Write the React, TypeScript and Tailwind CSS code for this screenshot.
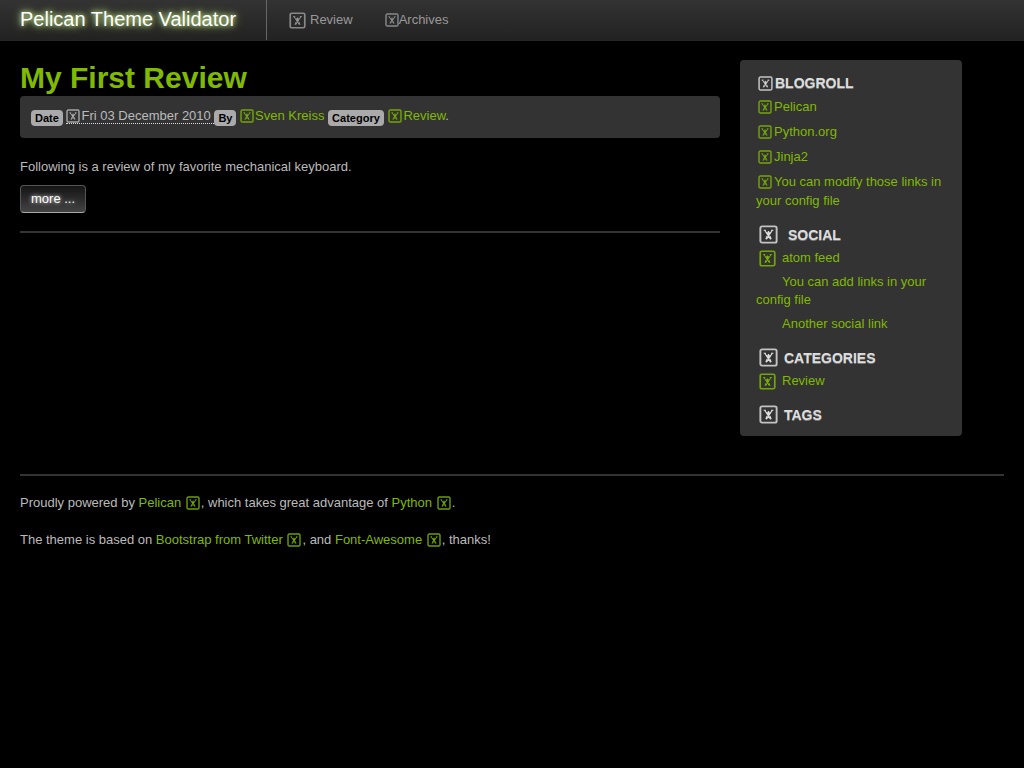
import type { ReactNode } from "react";

function Glyph({ className = "" }: { className?: string }) {
  return (
    <svg
      viewBox="0 0 18 18"
      aria-hidden="true"
      fill="none"
      stroke="currentColor"
      className={`inline-block shrink-0 ${className}`}
    >
      <rect x="1.3" y="1.3" width="15.4" height="15.4" rx="1.6" strokeWidth="1.8" opacity="0.85" />
      <path
        d="M4.4 4.9h2.2M11.4 4.9h2.2M5.4 5l5.6 8.6M12.6 5L7 13.6M9 5.8v3.4M7.4 6.4L9 9.6l1.6-3.2M6.4 13.4l1.2-3M11.6 13.4l-1.2-3"
        strokeWidth="1"
      />
    </svg>
  );
}

function Badge({ children }: { children: ReactNode }) {
  return (
    <span className="inline-block rounded bg-[#aaa] px-1 align-[-2px] text-[11px] leading-4 font-bold text-black">
      {children}
    </span>
  );
}

const link = "text-[#80b900] hover:underline";
const heading =
  "flex items-center text-sm leading-[18px] font-bold text-[#ddd] uppercase [text-shadow:0_1px_0_#777]";

function ExternalLink({ href, children }: { href: string; children: ReactNode }) {
  return (
    <a href={href} className={link}>
      {children} <Glyph className="mx-px size-3.5 align-[-3px]" />
    </a>
  );
}

const blogroll = [
  { label: "Pelican", href: "#pelican" },
  { label: "Python.org", href: "#python" },
  { label: "Jinja2", href: "#jinja2" },
  { label: "You can modify those links in your config file", href: "#config" },
];

export default function App() {
  return (
    <div className="min-h-screen bg-black font-['Liberation_Sans',Arial,sans-serif] text-[13px] leading-[18px] text-[#bbb]">
      <header className="border-b border-[#252525] bg-linear-to-b from-[#333] to-[#222]">
        <nav className="flex h-10 items-center px-5 text-[#999]">
          <a
            href="#home"
            className="w-[246px] pb-0.5 text-xl leading-5 text-white [text-shadow:0_0_5px_#c9e89a,0_0_10px_#b5e368]"
          >
            Pelican Theme Validator
          </a>
          <span className="h-10 w-px bg-[#666]" />
          <a href="#review" className="ml-[22px] flex items-center gap-1">
            <Glyph className="size-[17px]" />
            Review
          </a>
          <a href="#archives" className="ml-8 flex items-center">
            <Glyph className="size-3.5" />
            Archives
          </a>
        </nav>
      </header>

      <div className="px-5 pt-[19px]">
        <div className="grid grid-cols-[700fr_264fr] items-start gap-5">
          <main>
            <article className="border-b-2 border-[#333] pb-[18px]">
              <h1 className="text-[30px] leading-9 font-bold text-[#80b900]">
                <a href="#first-review">My First Review</a>
              </h1>
              <div className="rounded bg-[#333] px-[11px] pt-[11px] pb-3 leading-[17px]">
                <Badge>Date</Badge>{" "}
                <abbr
                  title="2010-12-03"
                  className="border-b border-dotted border-[#ddd] whitespace-pre no-underline"
                >
                  <Glyph className="mr-px size-3.5 align-[-3px]" />
                  {"Fri 03 December 2010 "}
                </abbr>
                <Badge>By</Badge>{" "}
                <a href="#author" className={link}>
                  <Glyph className="mr-px size-3.5 align-[-3px]" />
                  Sven Kreiss
                </a>{" "}
                <Badge>Category</Badge>{" "}
                <a href="#review" className={link}>
                  <Glyph className="mx-px size-3.5 align-[-3px]" />
                  Review
                </a>
                .
              </div>
              <p className="mt-5">Following is a review of my favorite mechanical keyboard.</p>
              <a
                href="#more"
                className="mt-[9px] inline-block rounded border border-[#555] border-b-[#aaa] bg-linear-to-b from-[#151515] to-[#444] px-2.5 py-1 text-white [text-shadow:0_0_4px_#fff]"
              >
                more ...
              </a>
            </article>
          </main>

          <aside className="w-[222px] rounded bg-[#333] px-4 pt-3.5 pb-3">
            <section>
              <h2 className={heading}>
                <Glyph className="mr-0.5 ml-0.5 size-[15px]" />
                Blogroll
              </h2>
              <ul className="mt-[5px] space-y-1.5 leading-[19px]">
                {blogroll.map((item) => (
                  <li key={item.label}>
                    <a href={item.href} className={link}>
                      <Glyph className="mr-0.5 ml-0.5 size-3.5 align-[-3px]" />
                      {item.label}
                    </a>
                  </li>
                ))}
              </ul>
            </section>
            <section className="mt-[15px]">
              <h2 className={heading}>
                <Glyph className="mr-2.5 ml-[3px] size-[19px]" />
                Social
              </h2>
              <ul className="mt-[5px] space-y-1.5">
                <li>
                  <a href="#atom" className={`flex items-center ${link}`}>
                    <Glyph className="mr-1.5 ml-[3px] size-[17px]" />
                    atom feed
                  </a>
                </li>
                <li className="indent-[26px]">
                  <a href="#add-links" className={link}>
                    You can add links in your config file
                  </a>
                </li>
                <li className="indent-[26px]">
                  <a href="#social" className={link}>
                    Another social link
                  </a>
                </li>
              </ul>
            </section>
            <section className="mt-[15px]">
              <h2 className={heading}>
                <Glyph className="mr-1.5 ml-[3px] size-[19px]" />
                Categories
              </h2>
              <ul className="mt-[5px]">
                <li>
                  <a href="#review" className={`flex items-center ${link}`}>
                    <Glyph className="mr-1.5 ml-[3px] size-[17px]" />
                    Review
                  </a>
                </li>
              </ul>
            </section>
            <section className="mt-[15px]">
              <h2 className={heading}>
                <Glyph className="mr-1.5 ml-[3px] size-[19px]" />
                Tags
              </h2>
            </section>
          </aside>
        </div>

        <footer className="mt-[38px] space-y-[19px] border-t-2 border-[#333] pt-[18px]">
          <p>
            Proudly powered by <ExternalLink href="#pelican">Pelican</ExternalLink>, which takes great
            advantage of <ExternalLink href="#python">Python</ExternalLink>.
          </p>
          <p>
            The theme is based on <ExternalLink href="#bootstrap">Bootstrap from Twitter</ExternalLink>,
            and <ExternalLink href="#font-awesome">Font-Awesome</ExternalLink>, thanks!
          </p>
        </footer>
      </div>
    </div>
  );
}
